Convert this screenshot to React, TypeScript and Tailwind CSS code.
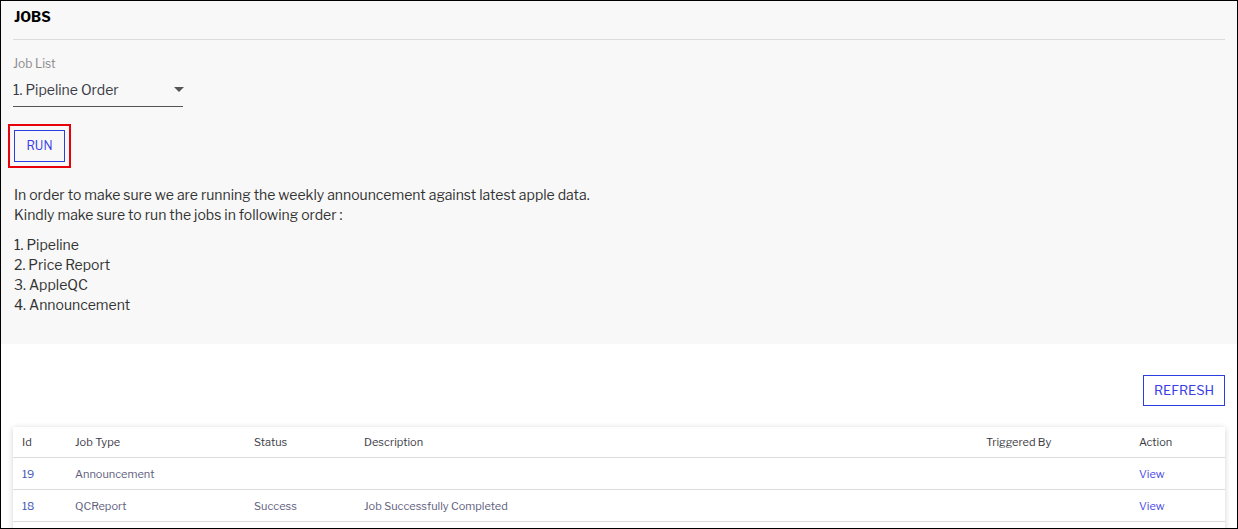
import React from 'react';

type Job = {
  id: number;
  jobType: string;
  status: string;
  description: string;
  triggeredBy: string;
};

const jobs: Job[] = [
  { id: 19, jobType: 'Announcement', status: '', description: '', triggeredBy: '' },
  { id: 18, jobType: 'QCReport', status: 'Success', description: 'Job Successfully Completed', triggeredBy: '' },
];

const steps = ['1. Pipeline', '2. Price Report', '3. AppleQC', '4. Announcement'];

const cols = 'grid grid-cols-[53px_179px_110px_622px_153px_1fr] items-center pl-[9px]';

export default function App() {
  return (
    <div
      className="w-[1238px] h-[529px] overflow-hidden border border-black bg-white"
      style={{ fontFamily: '"Libre Franklin", Roboto, "Noto Sans", sans-serif' }}
    >
      {/* 상단 회색 패널 */}
      <div className="bg-[#f8f8f8] h-[343px] px-3 pt-[8px]">
        <h1 className="text-[14px] font-bold text-black leading-[16px] pl-[1px]">JOBS</h1>
        <div className="mt-[14px] h-px bg-[#dcdcdc]" />

        <div className="mt-[16px] text-[12px] leading-[16px] text-[#8a8a8a]">Job List</div>
        <div className="mt-[8px] w-[170px] flex items-center justify-between border-b border-[#555] pb-[6px]">
          <span className="text-[14px] leading-[20px] text-[#3c3c46]">1. Pipeline Order</span>
          <svg width="10" height="6" viewBox="0 0 10 6" className="mr-[-1px]">
            <path d="M0 0 L10 0 L5 5 Z" fill="#555" />
          </svg>
        </div>

        <div className="mt-[17px] ml-[-5px] w-[63px] h-[44px] border-2 border-[#e8000b] p-[4px]">
          <button className="w-full h-full border border-[#2b3ee0] text-[12px] text-[#3b3ee6] bg-transparent">
            RUN
          </button>
        </div>

        <div className="mt-[17px] pl-[1px] text-[14px] leading-[20px] text-[#333]">
          <p>In order to make sure we are running the weekly announcement against latest apple data.</p>
          <p>Kindly make sure to run the jobs in following order :</p>
          <div className="mt-[10px]">
            {steps.map((s) => (
              <div key={s}>{s}</div>
            ))}
          </div>
        </div>
      </div>

      {/* 하단: 새로고침 + 테이블 */}
      <div className="px-3">
        <div className="flex justify-end pt-[31px]">
          <button className="w-[82px] h-[31px] border border-[#2b3ee0] text-[13px] text-[#3b3ee6] bg-white">
            REFRESH
          </button>
        </div>

        <div className="mt-[21px] bg-white shadow-[0_1px_6px_rgba(0,0,0,0.18)]">
          <div className={`${cols} h-[31px] border-b border-[#ddd] text-[11px] text-[#3c3c46]`}>
            <div>Id</div>
            <div>Job Type</div>
            <div>Status</div>
            <div>Description</div>
            <div>Triggered By</div>
            <div>Action</div>
          </div>
          {jobs.map((j) => (
            <div key={j.id} className={`${cols} h-[32px] border-b border-[#ddd] text-[11px] pt-[2px]`}>
              <div className="text-[#4457b5]">{j.id}</div>
              <div className="text-[#5e5e7e]">{j.jobType}</div>
              <div className="text-[#5e5e7e]">{j.status}</div>
              <div className="text-[#5e5e7e]">{j.description}</div>
              <div className="text-[#5e5e7e]">{j.triggeredBy}</div>
              <div className="text-[#4848e6]">View</div>
            </div>
          ))}
          <div className="h-[20px]" />
        </div>
      </div>
    </div>
  );
}
